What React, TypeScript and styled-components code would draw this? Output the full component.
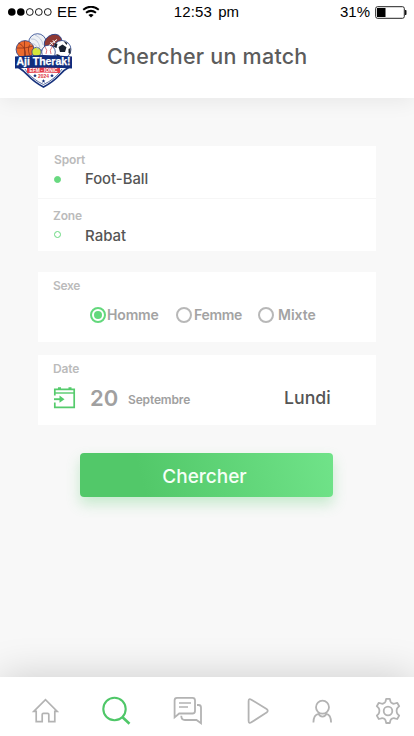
import React from "react";
import styled, { createGlobalStyle } from "styled-components";

const GlobalStyle = createGlobalStyle`
  * { box-sizing: border-box; }
  body { margin: 0; background: #f8f8f8; }
`;

const Screen = styled.div`
  width: 414px;
  height: 736px;
  display: flex;
  flex-direction: column;
  overflow: hidden;
  background: #f8f8f8;
  font-family: Inter, "Liberation Sans", sans-serif;
`;

const Header = styled.header`
  flex: none;
  height: 98px;
  background: #fff;
  box-shadow: 0 3px 20px rgba(0, 0, 0, 0.07);
`;

const StatusBar = styled.div`
  height: 24px;
  display: grid;
  grid-template-columns: 1fr auto 1fr;
  align-items: center;
  padding: 0 7px 0 8px;
  font: 15px/24px "Liberation Sans", Arial, sans-serif;
  color: #000;
`;

const StatusGroup = styled.div<{ $end?: boolean }>`
  display: flex;
  align-items: center;
  gap: 5px;
  justify-content: ${(p) => (p.$end ? "flex-end" : "flex-start")};
`;

const Clock = styled.time`
  word-spacing: 2px;
  letter-spacing: 0.1px;
  margin-right: 2px;
`;

const TitleRow = styled.div`
  display: flex;
  align-items: flex-start;
  padding: 9px 0 0 14px;
  gap: 34px;
`;

const Label = styled.span<{ $size: number; $color?: string; $track?: number; $weight?: number }>`
  font-size: ${(p) => p.$size}px;
  color: ${(p) => p.$color ?? "#555"};
  letter-spacing: ${(p) => p.$track ?? 0}px;
  font-weight: ${(p) => p.$weight ?? 500};
  line-height: 1;
  white-space: nowrap;
`;

const Title = styled.h1`
  margin: 11px 0 0;
  font-size: 21.5px;
  line-height: 24px;
  font-weight: 500;
  letter-spacing: 0.23px;
  color: #5c5c5c;
  white-space: nowrap;
`;

const Form = styled.main`
  flex: 1;
  padding: 48px 38px 0;
`;

const Card = styled.section<{ $height: number; $gap: number }>`
  height: ${(p) => p.$height}px;
  margin-bottom: ${(p) => p.$gap}px;
  background: #fff;
`;

const Field = styled.div<{ $height: number; $top: number; $left?: number; $divider?: boolean }>`
  height: ${(p) => p.$height}px;
  padding: ${(p) => p.$top}px 0 0 ${(p) => p.$left ?? 15}px;
  display: flex;
  flex-direction: column;
  border-bottom: ${(p) => (p.$divider ? "1px solid #f6f6f6" : "none")};
`;

const FieldValue = styled.div<{ $indent?: number }>`
  display: flex;
  align-items: center;
  height: 15px;
  margin-top: 6px;
  padding-left: ${(p) => p.$indent ?? 0}px;
  gap: 24px;
`;

const Dot = styled.i<{ $filled?: boolean }>`
  width: 7px;
  height: 7px;
  margin-bottom: ${(p) => (p.$filled ? 0 : 2)}px;
  border-radius: 50%;
  border: 1px solid #68d980;
  background: ${(p) => (p.$filled ? "#68d980" : "transparent")};
`;

const RadioRow = styled.div`
  display: flex;
  margin: 15px 0 0 37px;
`;

const RadioOption = styled.label<{ $gap: number; $width: number }>`
  display: flex;
  align-items: center;
  gap: ${(p) => p.$gap}px;
  width: ${(p) => p.$width}px;
`;

const RadioRing = styled.i<{ $on?: boolean }>`
  flex: none;
  width: 16px;
  height: 16px;
  border-radius: 50%;
  border: 2px solid ${(p) => (p.$on ? "#63d87c" : "#b8b8b8")};
  background: ${(p) => (p.$on ? "#63d87c" : "#fff")};
  background-clip: content-box;
  padding: 2px;
`;

const DateRow = styled.div`
  display: flex;
  align-items: center;
  height: 24px;
  margin-top: 11px;
`;

const CalendarSlot = styled.span`
  width: 37px;
  height: 24px;
`;

const DayNumber = styled(Label)`
  width: 38px;
`;

const Month = styled(Label)`
  width: 156px;
  margin-top: 4px;
`;

const SubmitButton = styled.button`
  display: block;
  width: 253px;
  height: 44px;
  margin: 0 0 0 42px;
  padding: 4px 0 0;
  border: 0;
  border-radius: 4px;
  background: linear-gradient(75deg, #52c869 25%, #70e389 100%);
  box-shadow: 0 7px 14px rgba(83, 203, 107, 0.3);
  color: #f5fff6;
  font: 500 19px/40px Inter, sans-serif;
  text-indent: -4px;
`;

const TabBar = styled.nav`
  flex: none;
  height: 59px;
  display: flex;
  align-items: center;
  padding: 9px 12px 0 31px;
  justify-content: space-between;
  background: #fff;
  box-shadow: 0 0 40px rgba(0, 0, 0, 0.18);
`;

const Tab = styled.a<{ $active?: boolean }>`
  display: flex;
  color: ${(p) => (p.$active ? "#4fc768" : "#b3b3b3")};
`;

const stroke = { fill: "none", stroke: "currentColor", strokeWidth: 1.8 } as const;

function Signal() {
  return (
    <svg width="44" height="8" viewBox="0 0 44 8">
      {[0, 1, 2, 3, 4].map((i) => (
        <circle key={i} cx={3.8 + i * 9} cy="4" r={i < 2 ? 3.8 : 3.4} fill={i < 2 ? "#000" : "#fff"} stroke="#000" strokeWidth={i < 2 ? 0 : 0.9} />
      ))}
    </svg>
  );
}

function Wifi() {
  return (
    <svg width="18" height="13" viewBox="0 0 18 13" fill="none" stroke="#000">
      <path d="M1.2 3.7Q9 -2.2 16.8 3.7" strokeWidth="2" />
      <path d="M4 6.8Q9 3 14 6.8" strokeWidth="2" />
      <path d="M6.4 9Q9 7 11.6 9L9 11.6Z" fill="#000" stroke="none" />
    </svg>
  );
}

function Battery() {
  return (
    <svg width="32" height="13" viewBox="0 0 32 13">
      <rect x="0.7" y="0.7" width="28.6" height="11.6" rx="1.8" fill="#fff" stroke="#222" />
      <rect x="2" y="2" width="8.5" height="9" fill="#000" />
      <path d="M30 4h.7q.8 0 .8 1v3q0 1-.8 1H30z" fill="#111" />
    </svg>
  );
}

const STAR = "M0-2L.6-.6 2-.6 .9.3 1.3 1.8 0 .9-1.3 1.8-.9.3-2-.6-.6-.6Z";

function Logo() {
  return (
    <svg width="59" height="56" viewBox="0 0 59 56">
      <g stroke="#24408a" strokeWidth="0.8">
        <circle cx="23.5" cy="9.5" r="8.8" fill="#eef1f5" />
        <ellipse cx="39" cy="9.5" rx="9.3" ry="7.6" transform="rotate(-35 39 9.5)" fill="#8f3933" />
        <circle cx="11" cy="16.5" r="8.9" fill="#ed6a2d" />
        <circle cx="48" cy="16.5" r="9" fill="#fff" />
        <circle cx="34.5" cy="19" r="6.8" fill="#fff" />
        <circle cx="22.5" cy="19" r="4.6" fill="#d5e83a" />
      </g>
      <g fill="none" stroke="#8b331c" strokeWidth="0.8">
        <path d="M10.5 8v16M2.5 15q8 1 17-2M4.5 10q8 4 7 13M17.5 10q-5 4-2 12" />
        <path d="M31 14q3 3 1 7M38 14q-3 3-1 7" stroke="#dc5960" />
        <path d="M17 6q7-1 9 9M21 2q7 3 8 10M16 11q6-2 8 6" stroke="#b3bed4" />
      </g>
      <path d="M35 12.5l8-6M36.5 9l2.2 2.8M38.9 7.2l2.2 2.8" stroke="#fff" strokeWidth="1" />
      <path d="M44.5 14l4-2.5 4 2.8-1.5 4.7h-5zM39.8 14l1.7-4 2 1-1 4zM49.5 8l4 2-1 2zM54.5 16l2-1v6l-2-1zM42.5 21l3 1 1 2h-4z" fill="#18202f" />
      <path d="M4 34Q10 38 13.5 42Q20 49 29.5 54Q39 49 45.5 42Q49.5 37 55.5 34Z" fill="#fff" stroke="#17327d" strokeWidth="1.8" />
      <path d="M11 36Q14 42 19 45Q24 49 29.5 51.5Q35 49 40 45Q44 42 48 36" fill="none" stroke="#17327d" strokeWidth="0.7" />
      <path d="M13 34.6Q29.5 33.4 46 34.6V40Q29.5 39 13 40Z" fill="#e43c49" />
      <path d="M1 23.5Q29 20.5 58 23.5V35.4Q29 33.4 1 35.4Z" fill="#112d7d" />
      <g fontFamily="Liberation Sans, sans-serif" fontWeight="700" textAnchor="middle">
        <text x="29.5" y="31.8" fontSize="10.6" fill="#fff" stroke="#fff" strokeWidth="0.25" textLength="54" lengthAdjust="spacingAndGlyphs">Aji Therak!</text>
        <text x="29.5" y="38.9" fontSize="5" fill="#fff" textLength="28" lengthAdjust="spacingAndGlyphs">EFM - IONIC</text>
        <text x="29.5" y="44.8" fontSize="5.2" fill="#dc3340" textLength="11" lengthAdjust="spacingAndGlyphs">2024</text>
      </g>
      <g fill="#17327d">
        <path d={STAR} transform="translate(21 42.5)" />
        <path d={STAR} transform="translate(38 42.5)" />
        <path d={STAR} transform="translate(29.5 48)" />
      </g>
    </svg>
  );
}

function CalendarIcon() {
  return (
    <svg width="23" height="24" viewBox="0 0 23 24" fill="none" stroke="#55cb6c" strokeWidth="1.7">
      <path d="M1.8 9.5V3.3H21.2V21.3H1.8V16.5" />
      <path d="M2 7H21" strokeWidth="1.4" />
      <path d="M5 2.4H8M15.5 2.4H18.5" strokeWidth="2.4" />
      <path d="M1 13.2H8" strokeWidth="1.9" />
      <path d="M6.5 9.6L11.5 13.2L6.5 16.8Z" fill="#55cb6c" stroke="none" />
    </svg>
  );
}

function HomeIcon() {
  return (
    <svg width="28" height="28" viewBox="0 0 28 28" {...stroke}>
      <path d="M2.8 14.4L14.5 2.6L26.2 14.4H23.8V24.6H17.8V17.5Q17.8 16.3 16.6 16.3H12.4Q11.2 16.3 11.2 17.5V24.6H5.2V14.4Z" strokeWidth="1.7" />
    </svg>
  );
}

function SearchIcon() {
  return (
    <svg width="30" height="30" viewBox="0 0 30 30" {...stroke} strokeWidth={2.1}>
      <circle cx="13.5" cy="13" r="11.2" />
      <path d="M21 20.7L28.5 27.7" strokeWidth="2.6" />
    </svg>
  );
}

function ChatIcon() {
  return (
    <svg width="30" height="30" viewBox="0 0 30 30" {...stroke}>
      <path d="M4 1.8H19.5Q22 1.8 22 4.3V15Q22 17.5 19.5 17.5H6.2L1.6 21.4V4.3Q1.6 1.8 4 1.8Z" />
      <path d="M6 7H18M6 11H15" strokeWidth="1.5" />
      <path d="M24 9H25.5Q28 9 28 11.5V27.3L23.5 24H12Q8.3 24 8.3 20V19.7" />
    </svg>
  );
}

function PlayIcon() {
  return (
    <svg width="24" height="28" viewBox="0 0 24 28" {...stroke} strokeLinejoin="round">
      <path d="M2.6 4.2Q2.6 1.1 5.4 2.7L20.6 12Q22.9 13.8 20.6 15.6L5.4 25.3Q2.6 26.9 2.6 23.8Z" />
    </svg>
  );
}

function PersonIcon() {
  return (
    <svg width="20" height="25" viewBox="0 0 20 25" {...stroke}>
      <circle cx="10.5" cy="8.2" r="6.5" />
      <path d="M1.4 23.6Q1.5 15.5 6.7 14.8Q7.5 17.6 10.5 17.6Q13.5 17.6 14.3 14.8Q19 15.5 19.1 23.6" />
    </svg>
  );
}

function GearIcon() {
  return (
    <svg width="28" height="28" viewBox="0 0 28 28" {...stroke} strokeLinejoin="round">
      <path d="M12.2 1.8H15.8L16.5 4.5Q17 5.8 18.5 6.4Q19.5 7 20.8 6.5L23.2 5.8L25.2 9.2L23.5 10.8Q22.6 11.8 22.6 13.8Q22.6 15.8 23.5 16.8L25.2 18.6L23.2 22L20.8 21.3Q19.5 20.8 18.5 21.4Q17 22 16.5 23.3L15.8 26H12.2L11.5 23.3Q11 22 9.5 21.4Q8.5 20.8 7.2 21.3L4.8 22L2.8 18.6L4.5 16.8Q5.4 15.8 5.4 13.8Q5.4 11.8 4.5 10.8L2.8 9.2L4.8 5.8L7.2 6.5Q8.5 7 9.5 6.4Q11 5.8 11.5 4.5Z" />
      <circle cx="14" cy="14" r="4.3" />
    </svg>
  );
}

const TABS = [
  { name: "home", Icon: HomeIcon },
  { name: "search", Icon: SearchIcon },
  { name: "chat", Icon: ChatIcon },
  { name: "play", Icon: PlayIcon },
  { name: "profile", Icon: PersonIcon },
  { name: "settings", Icon: GearIcon },
];

export default function App() {
  return (
    <>
      <GlobalStyle />
      <Screen>
        <Header>
          <StatusBar>
            <StatusGroup><Signal /><span>EE</span><Wifi /></StatusGroup>
            <Clock>12:53 pm</Clock>
            <StatusGroup $end><span>31%</span><Battery /></StatusGroup>
          </StatusBar>
          <TitleRow>
            <Logo />
            <Title>Chercher un match</Title>
          </TitleRow>
        </Header>
        <Form>
          <Card $height={105} $gap={21}>
            <Field $height={53} $top={8} $left={16} $divider>
              <Label $size={12} $weight={600} $track={-0.15} $color="#bbb">Sport</Label>
              <FieldValue>
                <Dot $filled />
                <Label $size={14.8}>Foot-Ball</Label>
              </FieldValue>
            </Field>
            <Field $height={52} $top={11}>
              <Label $size={12} $weight={600} $track={-0.15} $color="#bbb">Zone</Label>
              <FieldValue $indent={1}>
                <Dot />
                <Label $size={15}>Rabat</Label>
              </FieldValue>
            </Field>
          </Card>
          <Card $height={70} $gap={13}>
            <Field $height={70} $top={8}>
              <Label $size={12} $weight={600} $track={-0.35} $color="#bbb">Sexe</Label>
              <RadioRow>
                <RadioOption $gap={1} $width={86}><RadioRing $on /><Label $size={14} $weight={600} $track={-0.15} $color="#a3a3a3">Homme</Label></RadioOption>
                <RadioOption $gap={2} $width={82}><RadioRing /><Label $size={14} $weight={600} $track={-0.3} $color="#a3a3a3">Femme</Label></RadioOption>
                <RadioOption $gap={4} $width={70}><RadioRing /><Label $size={14} $weight={600} $color="#a3a3a3">Mixte</Label></RadioOption>
              </RadioRow>
            </Field>
          </Card>
          <Card $height={70} $gap={28}>
            <Field $height={70} $top={8}>
              <Label $size={12} $weight={600} $track={-0.15} $color="#bbb">Date</Label>
              <DateRow>
                <CalendarSlot><CalendarIcon /></CalendarSlot>
                <DayNumber $size={22} $weight={600} $color="#a0a0a0">20</DayNumber>
                <Month $size={12} $weight={600} $track={-0.15} $color="#a0a0a0">Septembre</Month>
                <Label $size={17.7}>Lundi</Label>
              </DateRow>
            </Field>
          </Card>
          <SubmitButton>Chercher</SubmitButton>
        </Form>
        <TabBar>
          {TABS.map(({ name, Icon }) => (
            <Tab key={name} $active={name === "search"}><Icon /></Tab>
          ))}
        </TabBar>
      </Screen>
    </>
  );
}
